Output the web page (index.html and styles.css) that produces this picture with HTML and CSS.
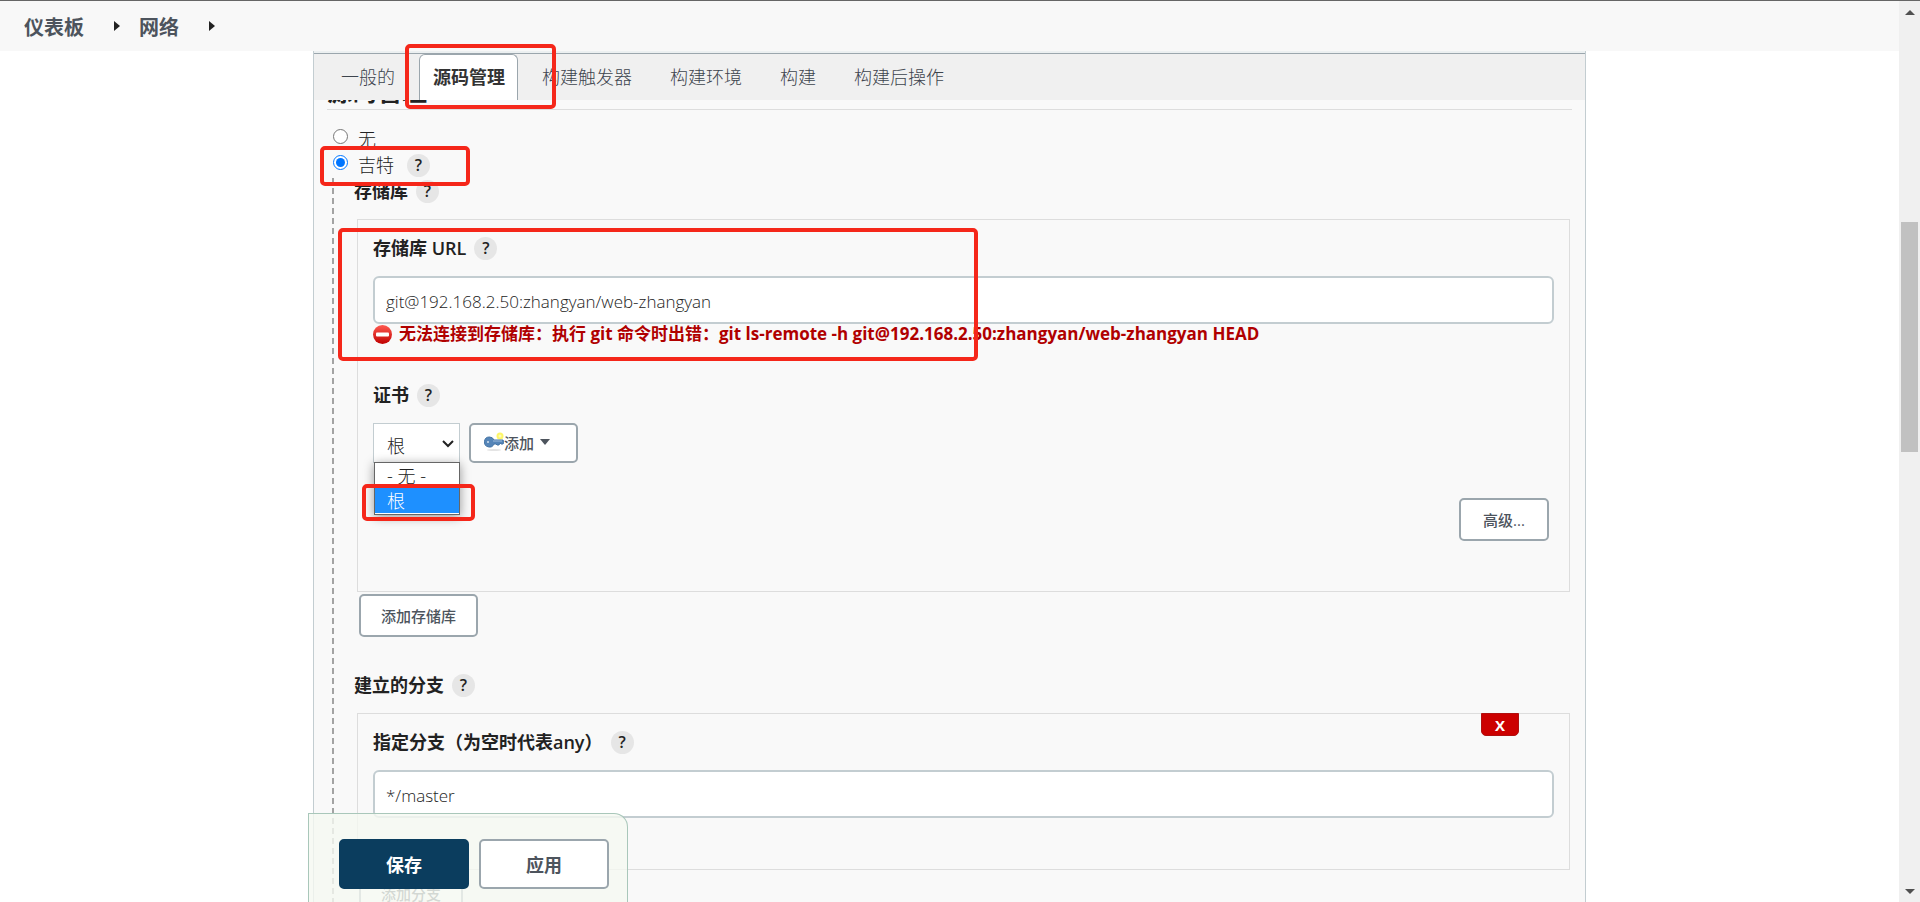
FILE: index.html
```html
<!DOCTYPE html>
<html lang="zh-CN">
<head>
    <meta charset="UTF-8">
    <meta name="viewport" content="width=device-width, initial-scale=1.0">
    <title>网络 配置</title>
    <link rel="stylesheet" href="styles.css">
</head>
<body>
<div class="page">
    <header class="breadcrumbs">
        <a href="#">仪表板</a>
        <span class="crumb-arrow"></span>
        <a href="#">网络</a>
        <span class="crumb-arrow"></span>
    </header>

    <main class="panel">
        <nav class="tabs">
            <a href="#" class="tab">一般的</a>
            <a href="#" class="tab active">源码管理<span class="mark mark-tab"></span></a>
            <a href="#" class="tab">构建触发器</a>
            <a href="#" class="tab">构建环境</a>
            <a href="#" class="tab">构建</a>
            <a href="#" class="tab">构建后操作</a>
        </nav>

        <form class="config" onsubmit="return false">
            <h2 class="section-title">源码管理</h2>

            <div class="radio-row">
                <input type="radio" name="scm" id="scmNone">
                <label for="scmNone">无</label>
            </div>
            <div class="radio-row">
                <input type="radio" name="scm" id="scmGit" checked>
                <label for="scmGit">吉特</label>
                <button type="button" class="help">?</button>
                <span class="mark mark-radio"></span>
            </div>

            <div class="nested">
                <div class="title-row first">存储库 <button type="button" class="help">?</button></div>
                <div class="box repo-box">
                    <div class="label-row">
                        <label for="repoUrl">存储库 URL</label>
                        <button type="button" class="help">?</button>
                    </div>
                    <input type="text" class="text-input" id="repoUrl" value="git@192.168.2.50:zhangyan/web-zhangyan">
                    <div class="error">
                        <svg width="19" height="19" viewBox="0 0 19 19">
                            <defs>
                                <linearGradient id="stop" x1="0" y1="0" x2="0" y2="1">
                                    <stop offset="0" stop-color="#ff5a50"/>
                                    <stop offset="1" stop-color="#c00000"/>
                                </linearGradient>
                            </defs>
                            <circle cx="9.5" cy="9.5" r="9.5" fill="url(#stop)"/>
                            <rect x="3" y="7.5" width="13" height="4" rx="1" fill="#fff"/>
                        </svg>
                        <span>无法连接到存储库：执行 git 命令时出错：git ls-remote -h git@192.168.2.50:zhangyan/web-zhangyan HEAD</span>
                    </div>
                    <span class="mark mark-url"></span>

                    <div class="label-row cred-label">
                        <label for="cred">证书</label>
                        <button type="button" class="help">?</button>
                    </div>
                    <div class="cred-row">
                        <div class="select-wrap">
                            <select id="cred">
                                <option>- 无 -</option>
                                <option selected>根</option>
                            </select>
                            <svg class="chevron" width="12" height="8" viewBox="0 0 12 8">
                                <path d="M1 1l5 5 5-5" fill="none" stroke="#222" stroke-width="2"/>
                            </svg>
                            <ul class="options">
                                <li>- 无 -</li>
                                <li class="selected">根</li>
                            </ul>
                            <span class="mark mark-option"></span>
                        </div>
                        <button type="button" class="btn add-btn">
                            <svg width="20" height="20" viewBox="0 0 20 20">
                                <ellipse cx="10" cy="18" rx="7" ry="1" fill="#e4e4e4"/>
                                <circle cx="16" cy="4" r="3.5" fill="#fdf66a"/>
                                <circle cx="16" cy="4" r="1.5" fill="#fffbb5"/>
                                <path d="M5.500 5a5 5 0 0 1 4.500 3h9l1 2-1 2h-2l-1-1-1 2h-2l-1-1h-2a5 5 0 1 1-4.500-7z" fill="#5585b8" stroke="#4474a5" stroke-width="1"/>
                                <path d="M9 9h9" stroke="#9dbbdb"/>
                                <circle cx="4" cy="10" r="1" fill="#d5e2ef"/>
                            </svg>
                            添加
                            <span class="caret"></span>
                        </button>
                    </div>
                    <div class="advanced-row">
                        <button type="button" class="btn">高级...</button>
                    </div>
                </div>
                <button type="button" class="btn box-btn">添加存储库</button>

                <div class="title-row">建立的分支 <button type="button" class="help">?</button></div>
                <div class="box branch-box">
                    <button type="button" class="delete">X</button>
                    <div class="label-row">
                        <label for="branch">指定分支（为空时代表any）</label>
                        <button type="button" class="help">?</button>
                    </div>
                    <input type="text" class="text-input" id="branch" value="*/master">
                </div>
                <button type="button" class="btn box-btn">添加分支</button>
            </div>
        </form>

        <div class="bottom-bar">
            <button type="button" class="save">保存</button>
            <button type="button" class="apply">应用</button>
        </div>
    </main>
</div>

<div class="scrollbar">
    <span class="arrow-up"></span>
    <div class="track"><div class="thumb"></div></div>
    <span class="arrow-down"></span>
</div>
</body>
</html>
```
FILE: styles.css
```css
* {
    box-sizing: border-box;
}
body {
    display: flex;
    height: 100vh;
    margin: 0;
    overflow: hidden;
    border-top: 1px solid #666;
    background: #fff;
    color: #222;
    font-family: "Open Sans", "Noto Sans CJK SC", sans-serif;
    font-size: 18px;
    font-weight: 300;
    line-height: 26px;
}
button, input, select {
    font-family: inherit;
    font-weight: inherit;
    color: inherit;
}
.page {
    flex: 1;
    display: flex;
    flex-direction: column;
    min-width: 0;
}

/* 頂部導航 */
.breadcrumbs {
    display: flex;
    align-items: center;
    flex: none;
    height: 50px;
    padding: 3px 24px 0;
    background: #f8f8f8;
    font-size: 20px;
    font-weight: bold;
}
.breadcrumbs a {
    color: #4d545d;
    text-decoration: none;
}
.crumb-arrow {
    margin: 0 19px 3px 30px;
    border: 5px solid transparent;
    border-left: 6px solid #222;
    border-right: 0;
}

.panel {
    position: relative;
    flex: 1;
    min-height: 0;
    width: 100%;
    max-width: 1273px;
    margin: 0 auto;
    border: 1px solid #c3cdd1;
    border-width: 0 1px;
    background: #f9f9f9;
}
.tabs {
    position: relative;
    z-index: 2;
    display: flex;
    height: 49px;
    padding-left: 8px;
    border-top: 2px solid #ecf0f1;
    background: #f0f0f0;
    box-shadow: inset 0 1px #9ba6ad;
}
.tab {
    position: relative;
    display: flex;
    align-items: center;
    margin-top: 1px;
    padding: 0 19px 2px 18px;
    border: 1px solid transparent;
    border-width: 1px 0 0 1px;
    color: #3d444d;
    text-decoration: none;
}
.tab.active {
    z-index: 1;
    margin-right: 5px;
    margin-left: 5px;
    padding: 0 12px 2px 13px;
    border-color: #9ba6ad;
    border-right-width: 1px;
    border-radius: 6px 6px 0 0;
    background: #fff;
    color: #333;
    font-weight: bold;
}

/* 設定表單 */
.config {
    height: 100%;
    margin-top: -49px;
    padding: 23px 13px 0;
    overflow: hidden;
}
.section-title {
    margin: 0 0 16px;
    border-bottom: 1px solid #ddd;
    font-size: 25px;
    line-height: 35px;
}
.radio-row {
    position: relative;
    display: flex;
    align-items: center;
    height: 26px;
    padding-left: 6px;
}
.radio-row input {
    width: 15px;
    height: 15px;
    margin: 0 10px 5px 0;
}
.help {
    width: 23px;
    height: 23px;
    margin-left: 8px;
    padding: 0;
    border: 0;
    border-radius: 50%;
    background: #e6e6e6;
    font-size: 16px;
    font-weight: 600;
    line-height: 23px;
}
.radio-row .help {
    margin-left: 13px;
}
.nested {
    margin-left: 5px;
    padding-left: 22px;
    background: repeating-linear-gradient(#a3a3a3 0 6px, transparent 6px 10px) 0 0 / 2px 100% no-repeat;
}
.title-row {
    display: flex;
    align-items: center;
    height: 26px;
    margin-top: 35px;
    font-weight: 600;
}
.title-row.first {
    margin-top: 0;
}
.box {
    position: relative;
    margin: 15px 2px 0 3px;
    padding: 15px 15px 0;
    border: 1px solid #ddd;
}
.repo-box {
    height: 373px;
}
.branch-box {
    height: 157px;
}
.label-row {
    display: flex;
    align-items: center;
    height: 26px;
    font-weight: 600;
}
.text-input {
    display: block;
    width: 100%;
    height: 48px;
    margin-top: 15px;
    padding: 3px 11px 0;
    border: 2px solid #c3cdd1;
    border-radius: 6px;
    background: #fff;
    font-size: 17px;
}
.error {
    display: flex;
    align-items: center;
    gap: 7px;
    height: 20px;
    color: #b00000;
    font-size: 17px;
    font-weight: bold;
    white-space: nowrap;
}
.cred-label {
    margin-top: 38px;
}
.cred-row {
    display: flex;
    gap: 9px;
    margin-top: 15px;
}
.select-wrap {
    position: relative;
    width: 87px;
    height: 40px;
}
.select-wrap select {
    width: 100%;
    height: 100%;
    padding: 5px 13px 0;
    border: 1px solid #c3cdd1;
    border-radius: 0;
    background: #fff;
    font-size: 18px;
    appearance: none;
}
.chevron {
    position: absolute;
    top: 17px;
    right: 6px;
}
.options {
    position: absolute;
    top: 39px;
    left: 1px;
    right: 0;
    margin: 0;
    padding: 0 0 1px;
    border: 1px solid #666;
    background: #fff;
    box-shadow: 0 2px 10px rgba(0, 0, 0, 0.4);
    list-style: none;
}
.options li {
    height: 25px;
    padding-left: 12px;
    line-height: 26px;
}
.options .selected {
    background: #1e90ff;
    color: #fff;
}
.btn {
    min-width: 90px;
    height: 43px;
    padding: 0 20px;
    border: 2px solid #9ba6ad;
    border-radius: 5px;
    background: #fff;
    color: #4d545d;
    font-size: 15px;
    font-weight: 500;
}
.add-btn {
    display: flex;
    align-items: center;
    width: 109px;
    height: 40px;
    padding: 0 13px 2px;
}
.caret {
    margin-left: 6px;
    border: 5px solid transparent;
    border-top: 6px solid #4d545d;
    border-bottom: 0;
}
.advanced-row {
    display: flex;
    justify-content: flex-end;
    margin: 35px 5px 0 0;
}
.box-btn {
    display: block;
    margin: 2px 0 0 5px;
}
.delete {
    position: absolute;
    top: -1px;
    right: 50px;
    width: 38px;
    height: 23px;
    padding: 0;
    border: 1px solid #b01010;
    border-radius: 0 0 5px 5px;
    background: #c00;
    color: #fff;
    font-size: 15px;
    font-weight: bold;
    line-height: 20px;
}

/* 底部按鈕 */
.bottom-bar {
    position: absolute;
    bottom: 0;
    left: -6px;
    display: flex;
    gap: 10px;
    height: 89px;
    padding: 25px 18px 0 30px;
    border: 1px solid #a9c7ba;
    border-bottom: 0;
    border-radius: 0 14px 0 0;
    background: rgba(245, 249, 241, 0.8);
}
.bottom-bar button {
    width: 130px;
    height: 50px;
    border: 2px solid #9ba6ad;
    border-radius: 5px;
    background: #fff;
    color: #4d545d;
    font-size: 18px;
    font-weight: bold;
}
.bottom-bar .save {
    border-color: #0b3d5e;
    background: #0b3d5e;
    color: #fff;
}

/* 紅色標註框 */
.mark {
    position: absolute;
    z-index: 3;
    border: 4px solid #f5271a;
    border-radius: 5px;
    pointer-events: none;
}
.mark-tab {
    top: -11px;
    left: -15px;
    width: 151px;
    height: 65px;
}
.mark-radio {
    top: -6px;
    left: -7px;
    width: 150px;
    height: 40px;
}
.mark-url {
    top: 8px;
    left: -20px;
    width: 640px;
    height: 133px;
}
.mark-option {
    top: 61px;
    left: -11px;
    width: 113px;
    height: 37px;
}

/* 捲軸 */
.scrollbar {
    display: flex;
    flex-direction: column;
    align-items: center;
    width: 21px;
    padding: 9px 0 8px;
    background: #f0f0f0;
}
.track {
    flex: 1;
    width: 17px;
    padding: 207px 0;
}
.thumb {
    height: 230px;
    background: #c1c1c1;
}
.arrow-up, .arrow-down {
    border: 5px solid transparent;
}
.arrow-up {
    border-top: 0;
    border-bottom-color: #505050;
}
.arrow-down {
    border-bottom: 0;
    border-top-color: #505050;
}
```
